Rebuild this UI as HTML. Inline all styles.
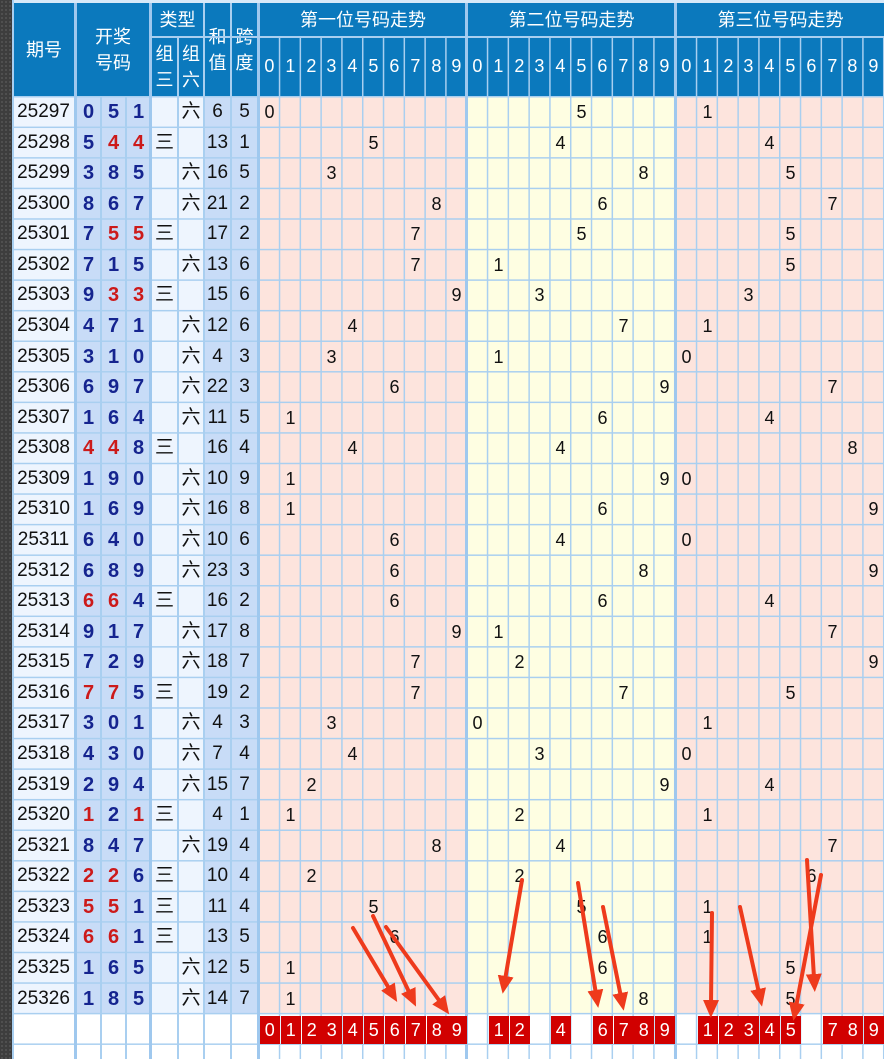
<!DOCTYPE html>
<html><head><meta charset="utf-8">
<style>
*{margin:0;padding:0;box-sizing:border-box}
html,body{width:884px;height:1059px;overflow:hidden;background:#fff;font-family:"Liberation Sans","Noto Sans CJK SC",sans-serif;position:relative}
#strip{position:absolute;left:0;top:0;width:12px;height:1059px;background:#3d3d3d;background-image:radial-gradient(#555 1px,transparent 1px);background-size:4px 4px}
.abs{position:absolute}
.hd{position:absolute;background:#0b79bd;color:#fff;display:flex;align-items:center;justify-content:center;text-align:center;font-size:18px;line-height:26px}
.bg{position:absolute;top:97px;height:917px}
.vl{position:absolute;top:3px;height:1056px;width:2px;background:#a9cff0}
.vl2{position:absolute;top:3px;height:1056px;width:3px;background:#9fc8ee}
#hl{position:absolute;left:12px;top:96px;width:872px;height:963px;background-image:linear-gradient(to bottom,#a9cff0 0,#a9cff0 1.5px,transparent 1.5px);background-size:100% 30.57px}
.tg{position:absolute;top:37px;height:1022px;background-image:linear-gradient(to right,#a9cff0 0,#a9cff0 1.5px,transparent 1.5px);background-size:20.8px 100%}
.r{position:absolute;left:0;width:884px;height:30.57px;font-size:19px;line-height:30.57px}
.r b,.r i{position:absolute;top:0;text-align:center;font-weight:normal;font-style:normal}
.q{left:12px;width:63px;color:#111}
.n{width:25px;font-weight:bold!important;color:#15248f;font-size:20px}
.n.x{color:#cc1a1a}
.p1{left:76px}.p2{left:101px}.p3{left:126px}
.t3{left:151px;width:27px;color:#111}.t6{left:178px;width:26px;color:#111}
.s{left:204px;width:27px;color:#111}.k{left:231px;width:27px;color:#111}
.r i{width:21px;color:#111;font-size:18px}
.a0{left:259px}.a1{left:280px}.a2{left:301px}.a3{left:321px}.a4{left:342px}.a5{left:363px}.a6{left:384px}.a7{left:405px}.a8{left:426px}.a9{left:446px}
.b0{left:467px}.b1{left:488px}.b2{left:509px}.b3{left:529px}.b4{left:550px}.b5{left:571px}.b6{left:592px}.b7{left:613px}.b8{left:633px}.b9{left:654px}
.c0{left:676px}.c1{left:697px}.c2{left:718px}.c3{left:738px}.c4{left:759px}.c5{left:780px}.c6{left:801px}.c7{left:822px}.c8{left:842px}.c9{left:863px}
.rd{position:absolute;top:1016px;height:28px;width:19.5px;background:#d10000;color:#fff;font-size:18px;line-height:28px;text-align:center}
.hn{position:absolute;top:37px;height:59px;width:20.8px;color:#fff;font-size:18px;line-height:59px;text-align:center}
</style></head><body>
<div id="strip"></div>
<div class="bg" style="left:12px;width:63px;background:#eef5fe"></div>
<div class="bg" style="left:75px;width:76px;background:#c8dcf7"></div>
<div class="bg" style="left:151px;width:53px;background:#eef5fe"></div>
<div class="bg" style="left:204px;width:55px;background:#c8dcf7"></div>
<div class="bg" style="left:259px;width:208px;background:#fde4dd"></div>
<div class="bg" style="left:467px;width:209px;background:#fefee2"></div>
<div class="bg" style="left:676px;width:208px;background:#fde4dd"></div>
<div class="abs" style="left:12px;top:0;width:872px;height:97px;background:#a9cff0"></div>
<div class="abs" style="left:12px;top:0;width:872px;height:3px;background:#d8e9f8"></div>
<div class="hd" style="left:14px;top:3px;width:60px;height:93px">期号</div>
<div class="hd" style="left:77px;top:3px;width:72px;height:93px">开奖<br>号码</div>
<div class="hd" style="left:152px;top:3px;width:51px;height:33px">类型</div>
<div class="hd" style="left:152px;top:38px;width:25px;height:58px">组<br>三</div>
<div class="hd" style="left:179px;top:38px;width:24px;height:58px">组<br>六</div>
<div class="hd" style="left:205px;top:3px;width:25px;height:93px">和<br>值</div>
<div class="hd" style="left:232px;top:3px;width:25px;height:93px">跨<br>度</div>
<div class="hd" style="left:260px;top:3px;width:206px;height:33px">第一位号码走势</div>
<div class="hd" style="left:468px;top:3px;width:207px;height:33px">第二位号码走势</div>
<div class="hd" style="left:677px;top:3px;width:207px;height:33px">第三位号码走势</div>
<div class="abs" style="left:260px;top:37px;width:624px;height:59px;background:#0b79bd"></div>
<div id="hl"></div>
<div class="tg" style="left:258px;width:209px"></div>
<div class="tg" style="left:466px;width:210px"></div>
<div class="tg" style="left:675px;width:209px"></div>
<div class="abs" style="left:12px;top:0;width:2px;height:1059px;background:#a9cff0"></div>
<div class="vl2" style="left:74px"></div>
<div class="vl" style="left:100px;top:97px;height:962px"></div>
<div class="vl" style="left:125px;top:97px;height:962px"></div>
<div class="vl2" style="left:149px"></div>
<div class="vl" style="left:177px;top:37px;height:1022px"></div>
<div class="vl" style="left:203px"></div>
<div class="vl" style="left:230px"></div>
<div class="vl2" style="left:257px"></div>
<div class="vl2" style="left:465px"></div>
<div class="vl2" style="left:674px"></div>
<div class="abs" style="left:150px;top:36px;width:734px;height:2px;background:#a9cff0"></div>
<div class="hn" style="left:259px">0</div><div class="hn" style="left:280px">1</div><div class="hn" style="left:301px">2</div><div class="hn" style="left:321px">3</div><div class="hn" style="left:342px">4</div><div class="hn" style="left:363px">5</div><div class="hn" style="left:384px">6</div><div class="hn" style="left:405px">7</div><div class="hn" style="left:426px">8</div><div class="hn" style="left:446px">9</div>
<div class="hn" style="left:467px">0</div><div class="hn" style="left:488px">1</div><div class="hn" style="left:509px">2</div><div class="hn" style="left:529px">3</div><div class="hn" style="left:550px">4</div><div class="hn" style="left:571px">5</div><div class="hn" style="left:592px">6</div><div class="hn" style="left:613px">7</div><div class="hn" style="left:633px">8</div><div class="hn" style="left:654px">9</div>
<div class="hn" style="left:676px">0</div><div class="hn" style="left:697px">1</div><div class="hn" style="left:718px">2</div><div class="hn" style="left:738px">3</div><div class="hn" style="left:759px">4</div><div class="hn" style="left:780px">5</div><div class="hn" style="left:801px">6</div><div class="hn" style="left:822px">7</div><div class="hn" style="left:842px">8</div><div class="hn" style="left:863px">9</div>
<div class="r" style="top:97px"><b class="q">25297</b><b class="n p1">0</b><b class="n p2">5</b><b class="n p3">1</b><b class="t6">六</b><b class="s">6</b><b class="k">5</b><i class="a0">0</i><i class="b5">5</i><i class="c1">1</i></div>
<div class="r" style="top:127.57px"><b class="q">25298</b><b class="n p1">5</b><b class="n x p2">4</b><b class="n x p3">4</b><b class="t3">三</b><b class="s">13</b><b class="k">1</b><i class="a5">5</i><i class="b4">4</i><i class="c4">4</i></div>
<div class="r" style="top:158.14px"><b class="q">25299</b><b class="n p1">3</b><b class="n p2">8</b><b class="n p3">5</b><b class="t6">六</b><b class="s">16</b><b class="k">5</b><i class="a3">3</i><i class="b8">8</i><i class="c5">5</i></div>
<div class="r" style="top:188.71px"><b class="q">25300</b><b class="n p1">8</b><b class="n p2">6</b><b class="n p3">7</b><b class="t6">六</b><b class="s">21</b><b class="k">2</b><i class="a8">8</i><i class="b6">6</i><i class="c7">7</i></div>
<div class="r" style="top:219.28px"><b class="q">25301</b><b class="n p1">7</b><b class="n x p2">5</b><b class="n x p3">5</b><b class="t3">三</b><b class="s">17</b><b class="k">2</b><i class="a7">7</i><i class="b5">5</i><i class="c5">5</i></div>
<div class="r" style="top:249.85px"><b class="q">25302</b><b class="n p1">7</b><b class="n p2">1</b><b class="n p3">5</b><b class="t6">六</b><b class="s">13</b><b class="k">6</b><i class="a7">7</i><i class="b1">1</i><i class="c5">5</i></div>
<div class="r" style="top:280.42px"><b class="q">25303</b><b class="n p1">9</b><b class="n x p2">3</b><b class="n x p3">3</b><b class="t3">三</b><b class="s">15</b><b class="k">6</b><i class="a9">9</i><i class="b3">3</i><i class="c3">3</i></div>
<div class="r" style="top:310.99px"><b class="q">25304</b><b class="n p1">4</b><b class="n p2">7</b><b class="n p3">1</b><b class="t6">六</b><b class="s">12</b><b class="k">6</b><i class="a4">4</i><i class="b7">7</i><i class="c1">1</i></div>
<div class="r" style="top:341.56px"><b class="q">25305</b><b class="n p1">3</b><b class="n p2">1</b><b class="n p3">0</b><b class="t6">六</b><b class="s">4</b><b class="k">3</b><i class="a3">3</i><i class="b1">1</i><i class="c0">0</i></div>
<div class="r" style="top:372.13px"><b class="q">25306</b><b class="n p1">6</b><b class="n p2">9</b><b class="n p3">7</b><b class="t6">六</b><b class="s">22</b><b class="k">3</b><i class="a6">6</i><i class="b9">9</i><i class="c7">7</i></div>
<div class="r" style="top:402.7px"><b class="q">25307</b><b class="n p1">1</b><b class="n p2">6</b><b class="n p3">4</b><b class="t6">六</b><b class="s">11</b><b class="k">5</b><i class="a1">1</i><i class="b6">6</i><i class="c4">4</i></div>
<div class="r" style="top:433.27px"><b class="q">25308</b><b class="n x p1">4</b><b class="n x p2">4</b><b class="n p3">8</b><b class="t3">三</b><b class="s">16</b><b class="k">4</b><i class="a4">4</i><i class="b4">4</i><i class="c8">8</i></div>
<div class="r" style="top:463.84px"><b class="q">25309</b><b class="n p1">1</b><b class="n p2">9</b><b class="n p3">0</b><b class="t6">六</b><b class="s">10</b><b class="k">9</b><i class="a1">1</i><i class="b9">9</i><i class="c0">0</i></div>
<div class="r" style="top:494.41px"><b class="q">25310</b><b class="n p1">1</b><b class="n p2">6</b><b class="n p3">9</b><b class="t6">六</b><b class="s">16</b><b class="k">8</b><i class="a1">1</i><i class="b6">6</i><i class="c9">9</i></div>
<div class="r" style="top:524.98px"><b class="q">25311</b><b class="n p1">6</b><b class="n p2">4</b><b class="n p3">0</b><b class="t6">六</b><b class="s">10</b><b class="k">6</b><i class="a6">6</i><i class="b4">4</i><i class="c0">0</i></div>
<div class="r" style="top:555.55px"><b class="q">25312</b><b class="n p1">6</b><b class="n p2">8</b><b class="n p3">9</b><b class="t6">六</b><b class="s">23</b><b class="k">3</b><i class="a6">6</i><i class="b8">8</i><i class="c9">9</i></div>
<div class="r" style="top:586.12px"><b class="q">25313</b><b class="n x p1">6</b><b class="n x p2">6</b><b class="n p3">4</b><b class="t3">三</b><b class="s">16</b><b class="k">2</b><i class="a6">6</i><i class="b6">6</i><i class="c4">4</i></div>
<div class="r" style="top:616.69px"><b class="q">25314</b><b class="n p1">9</b><b class="n p2">1</b><b class="n p3">7</b><b class="t6">六</b><b class="s">17</b><b class="k">8</b><i class="a9">9</i><i class="b1">1</i><i class="c7">7</i></div>
<div class="r" style="top:647.26px"><b class="q">25315</b><b class="n p1">7</b><b class="n p2">2</b><b class="n p3">9</b><b class="t6">六</b><b class="s">18</b><b class="k">7</b><i class="a7">7</i><i class="b2">2</i><i class="c9">9</i></div>
<div class="r" style="top:677.83px"><b class="q">25316</b><b class="n x p1">7</b><b class="n x p2">7</b><b class="n p3">5</b><b class="t3">三</b><b class="s">19</b><b class="k">2</b><i class="a7">7</i><i class="b7">7</i><i class="c5">5</i></div>
<div class="r" style="top:708.4px"><b class="q">25317</b><b class="n p1">3</b><b class="n p2">0</b><b class="n p3">1</b><b class="t6">六</b><b class="s">4</b><b class="k">3</b><i class="a3">3</i><i class="b0">0</i><i class="c1">1</i></div>
<div class="r" style="top:738.97px"><b class="q">25318</b><b class="n p1">4</b><b class="n p2">3</b><b class="n p3">0</b><b class="t6">六</b><b class="s">7</b><b class="k">4</b><i class="a4">4</i><i class="b3">3</i><i class="c0">0</i></div>
<div class="r" style="top:769.54px"><b class="q">25319</b><b class="n p1">2</b><b class="n p2">9</b><b class="n p3">4</b><b class="t6">六</b><b class="s">15</b><b class="k">7</b><i class="a2">2</i><i class="b9">9</i><i class="c4">4</i></div>
<div class="r" style="top:800.11px"><b class="q">25320</b><b class="n x p1">1</b><b class="n p2">2</b><b class="n x p3">1</b><b class="t3">三</b><b class="s">4</b><b class="k">1</b><i class="a1">1</i><i class="b2">2</i><i class="c1">1</i></div>
<div class="r" style="top:830.68px"><b class="q">25321</b><b class="n p1">8</b><b class="n p2">4</b><b class="n p3">7</b><b class="t6">六</b><b class="s">19</b><b class="k">4</b><i class="a8">8</i><i class="b4">4</i><i class="c7">7</i></div>
<div class="r" style="top:861.25px"><b class="q">25322</b><b class="n x p1">2</b><b class="n x p2">2</b><b class="n p3">6</b><b class="t3">三</b><b class="s">10</b><b class="k">4</b><i class="a2">2</i><i class="b2">2</i><i class="c6">6</i></div>
<div class="r" style="top:891.82px"><b class="q">25323</b><b class="n x p1">5</b><b class="n x p2">5</b><b class="n p3">1</b><b class="t3">三</b><b class="s">11</b><b class="k">4</b><i class="a5">5</i><i class="b5">5</i><i class="c1">1</i></div>
<div class="r" style="top:922.39px"><b class="q">25324</b><b class="n x p1">6</b><b class="n x p2">6</b><b class="n p3">1</b><b class="t3">三</b><b class="s">13</b><b class="k">5</b><i class="a6">6</i><i class="b6">6</i><i class="c1">1</i></div>
<div class="r" style="top:952.96px"><b class="q">25325</b><b class="n p1">1</b><b class="n p2">6</b><b class="n p3">5</b><b class="t6">六</b><b class="s">12</b><b class="k">5</b><i class="a1">1</i><i class="b6">6</i><i class="c5">5</i></div>
<div class="r" style="top:983.53px"><b class="q">25326</b><b class="n p1">1</b><b class="n p2">8</b><b class="n p3">5</b><b class="t6">六</b><b class="s">14</b><b class="k">7</b><i class="a1">1</i><i class="b8">8</i><i class="c5">5</i></div>
<div class="rd" style="left:260px">0</div><div class="rd" style="left:281px">1</div><div class="rd" style="left:302px">2</div><div class="rd" style="left:322px">3</div><div class="rd" style="left:343px">4</div><div class="rd" style="left:364px">5</div><div class="rd" style="left:385px">6</div><div class="rd" style="left:406px">7</div><div class="rd" style="left:427px">8</div><div class="rd" style="left:447px">9</div>
<div class="rd" style="left:489px">1</div><div class="rd" style="left:510px">2</div><div class="rd" style="left:551px">4</div><div class="rd" style="left:593px">6</div><div class="rd" style="left:614px">7</div><div class="rd" style="left:634px">8</div><div class="rd" style="left:655px">9</div>
<div class="rd" style="left:698px">1</div><div class="rd" style="left:719px">2</div><div class="rd" style="left:739px">3</div><div class="rd" style="left:760px">4</div><div class="rd" style="left:781px">5</div><div class="rd" style="left:823px">7</div><div class="rd" style="left:843px">8</div><div class="rd" style="left:864px">9</div>
<svg class="abs" style="left:0;top:0" width="884" height="1059" viewBox="0 0 884 1059">
<defs><marker id="ah" markerWidth="18" markerHeight="16" refX="4" refY="8" orient="auto" markerUnits="userSpaceOnUse"><path d="M0,0 L18,8 L0,16 Z" fill="#ee3a1c"/></marker></defs>
<g stroke="#ee3a1c" stroke-width="4" fill="none" marker-end="url(#ah)" stroke-linecap="round">
<line x1="353" y1="928" x2="390" y2="990"/>
<line x1="373" y1="916" x2="410" y2="994"/>
<line x1="386" y1="927" x2="441" y2="1003"/>
<line x1="522" y1="880" x2="505" y2="980"/>
<line x1="578" y1="883" x2="596" y2="994"/>
<line x1="603" y1="907" x2="621" y2="997"/>
<line x1="712" y1="913" x2="711" y2="1004"/>
<line x1="740" y1="907" x2="759" y2="993"/>
<line x1="807" y1="860" x2="814" y2="978"/>
<line x1="821" y1="875" x2="796" y2="1007"/>
</g></svg>
</body></html>
